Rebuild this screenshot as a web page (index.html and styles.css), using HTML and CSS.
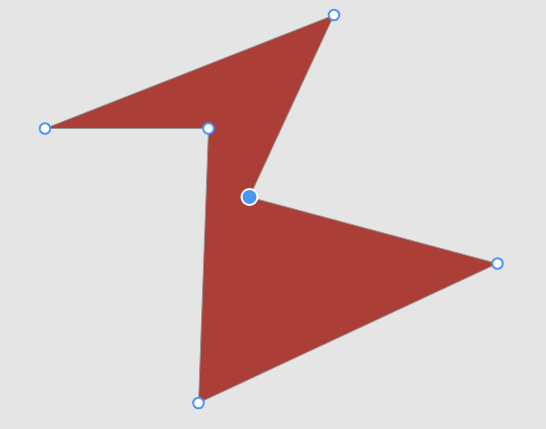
FILE: index.html
```html
<!DOCTYPE html>
<html>
<head>
<meta charset="utf-8">
<link rel="stylesheet" href="styles.css">
</head>
<body>
<div class="canvas">
<svg class="stage" width="546" height="429" viewBox="0 0 546 429">
  <polygon class="shape" points="334,15 45,128.5 208.5,128.5 198.5,403 497.5,263.5 249.5,197"/>
  <circle class="handle" cx="334" cy="15" r="5.3"/>
  <circle class="handle" cx="45" cy="128.5" r="5.3"/>
  <circle class="handle" cx="208.5" cy="128.5" r="5.3"/>
  <circle class="handle" cx="198.5" cy="403" r="5.3"/>
  <circle class="handle" cx="497.5" cy="263.5" r="5.3"/>
  <circle class="center" cx="249.5" cy="197" r="8"/>
</svg>
</div>
</body>
</html>
```
FILE: styles.css
```css
html, body {
  margin: 0;
  padding: 0;
  background: #e5e5e5;
}
.canvas {
  width: 546px;
  height: 429px;
  overflow: hidden;
}
.stage {
  display: block;
}
.shape {
  fill: #ab3f38;
  stroke: #999999;
  stroke-width: 1;
  stroke-linejoin: miter;
}
.handle {
  fill: #ffffff;
  stroke: #4a96f0;
  stroke-width: 2;
}
.center {
  fill: #4a96f0;
  stroke: #ffffff;
  stroke-width: 2;
}
```
